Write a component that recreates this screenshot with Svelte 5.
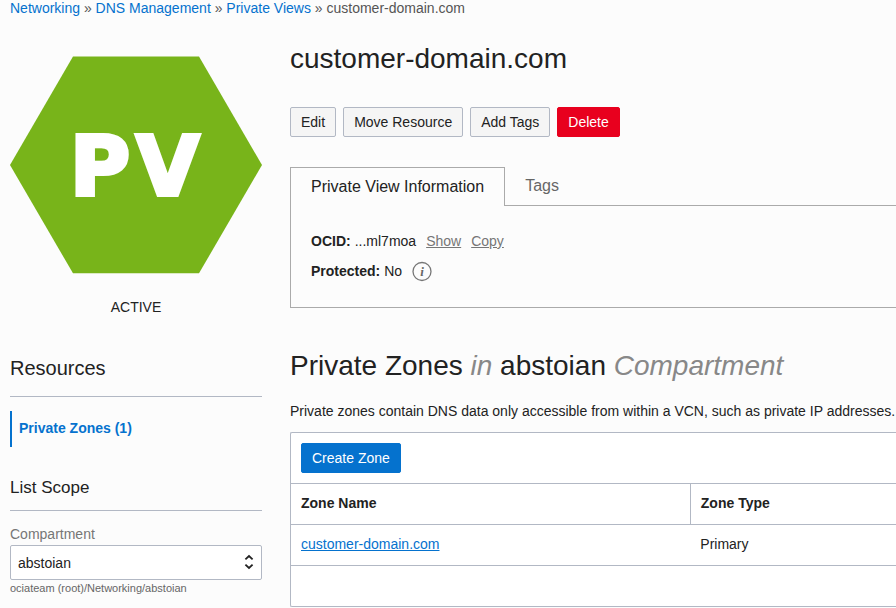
<script>
	const crumbs = ['Networking', 'DNS Management', 'Private Views'];

	const domain = 'customer-domain.com';
	const tabs = ['Private View Information', 'Tags'];
	let activeTab = $state(0);

	let compartment = $state('abstoian');

	const zones = [{ name: 'customer-domain.com', type: 'Primary' }];
</script>

<div class="page">
	<nav class="breadcrumb" aria-label="Breadcrumb">
		{#each crumbs as crumb}
			<a href="#top">{crumb}</a> <span class="sep">»</span>{' '}
		{/each}
		<span class="current">{domain}</span>
	</nav>

	<div class="columns">
		<aside>
			<svg class="hexagon" viewBox="0 0 252 218" role="img" aria-label="Private View">
				<polygon points="63,0.5 189,0.5 252,109 189,217.3 63,217.3 0,109" fill="#78b41a" />
				<text x="60 126" y="139">PV</text>
			</svg>
			<p class="status">ACTIVE</p>

			<h2 class="resources">Resources</h2>
			<a class="side-link" href="#zones">Private Zones ({zones.length})</a>

			<h3 class="scope">List Scope</h3>
			<label for="compartment">Compartment</label>
			<div class="select">
				<select id="compartment" bind:value={compartment}>
					<option value="abstoian">abstoian</option>
				</select>
				<svg class="arrows" viewBox="0 0 10 16" aria-hidden="true">
					<path d="M1.4 5.4 L5 2 L8.6 5.4 M1.4 10.6 L5 14 L8.6 10.6" />
				</svg>
			</div>
			<p class="path">ociateam (root)/Networking/abstoian</p>
		</aside>

		<main>
			<h1>{domain}</h1>

			<div class="actions">
				<button>Edit</button>
				<button>Move Resource</button>
				<button>Add Tags</button>
				<button class="danger">Delete</button>
			</div>

			<div class="tabs" role="tablist">
				{#each tabs as tab, i}
					<button
						role="tab"
						class="tab"
						class:active={activeTab === i}
						aria-selected={activeTab === i}
						onclick={() => (activeTab = i)}>{tab}</button
					>
				{/each}
				<div class="tab-line"></div>
			</div>
			<div class="panel" role="tabpanel">
				<div class="field">
					<b>OCID:</b>
					<span>...ml7moa</span>
					<a href="#show">Show</a>
					<a href="#copy">Copy</a>
				</div>
				<div class="field">
					<b>Protected:</b>
					<span>No</span>
					<svg class="info" viewBox="0 0 20 20" role="img" aria-label="Information">
						<circle cx="10" cy="10.5" r="9" />
						<text x="10" y="15" text-anchor="middle">i</text>
					</svg>
				</div>
			</div>

			<h2 class="zones-title" id="zones">
				Private Zones <em>in</em> {compartment} <em>Compartment</em>
			</h2>
			<p class="intro">
				Private zones contain DNS data only accessible from within a VCN, such as private IP addresses.
			</p>

			<div class="zones">
				<div class="toolbar">
					<button class="primary">Create Zone</button>
				</div>
				<table>
					<thead>
						<tr>
							<th class="name">Zone Name</th>
							<th>Zone Type</th>
						</tr>
					</thead>
					<tbody>
						{#each zones as zone}
							<tr>
								<td><a href="#zone">{zone.name}</a></td>
								<td>{zone.type}</td>
							</tr>
						{/each}
					</tbody>
				</table>
				<div class="footer"></div>
			</div>
		</main>
	</div>
</div>

<style>
	:global(body) {
		background: #fcfcfc;
	}
	.page {
		font-family: 'Liberation Sans', Arial, sans-serif;
		font-size: 14px;
		line-height: 16px;
		color: #222;
		padding-left: 10px;
	}
	h1,
	h2,
	h3,
	p {
		margin: 0;
		font-weight: normal;
	}
	a {
		color: #0572ce;
	}
	button,
	select {
		font: inherit;
		color: inherit;
	}

	.breadcrumb a {
		text-decoration: none;
	}
	.sep,
	.current {
		color: #555;
	}

	.columns {
		display: grid;
		grid-template-columns: 252px minmax(0, 1fr);
		column-gap: 28px;
	}

	/* left column */
	aside {
		padding-top: 40px;
	}
	.hexagon {
		display: block;
		width: 100%;
	}
	.hexagon text {
		font-family: 'DejaVu Sans', sans-serif;
		font-weight: bold;
		font-size: 82px;
		fill: #fff;
		stroke: #fff;
		stroke-width: 4;
	}
	.status {
		margin-top: 25px;
		text-align: center;
	}
	.resources {
		margin-top: 41px;
		padding-bottom: 16px;
		font-size: 20px;
		line-height: 24px;
		border-bottom: 1px solid #b2b8c4;
	}
	.side-link {
		display: block;
		margin-top: 14px;
		padding: 0 7px 2px;
		border-left: 2px solid #0572ce;
		font-weight: bold;
		line-height: 34px;
		text-decoration: none;
	}
	.scope {
		margin-top: 31px;
		padding-bottom: 12px;
		font-size: 17px;
		line-height: 20px;
		border-bottom: 1px solid #b2b8c4;
	}
	label {
		display: block;
		margin-top: 15px;
		color: #767676;
	}
	.select {
		position: relative;
		margin-top: 3px;
	}
	select {
		display: block;
		appearance: none;
		width: 100%;
		height: 35px;
		padding: 0 24px 0 7px;
		border: 1px solid #b2b8c4;
		border-radius: 2px;
		background: #fff;
	}
	.arrows {
		position: absolute;
		right: 8px;
		top: 9px;
		width: 10px;
		height: 16px;
		fill: none;
		stroke: #222;
		stroke-width: 1.8;
		pointer-events: none;
	}
	.path {
		font-size: 11px;
		color: #666;
	}

	/* right column */
	main {
		padding-top: 27px;
	}
	h1,
	.zones-title {
		font-size: 28px;
		line-height: 32px;
	}
	.actions {
		display: flex;
		gap: 7px;
		margin-top: 32px;
	}
	.actions button,
	.primary {
		height: 30px;
		padding: 0 10px;
		border: 1px solid #b2b8c4;
		border-radius: 2px;
		background: #f5f5f5;
	}
	.actions .danger {
		border-color: #e8001e;
		background: #e8001e;
		color: #fff;
	}
	.zones .primary {
		border-color: #0572ce;
		background: #0572ce;
		color: #fff;
	}

	.tabs {
		display: flex;
		margin-top: 30px;
	}
	.tab {
		height: 39px;
		padding: 0 20px;
		border: 0;
		border-bottom: 1px solid #aaa;
		background: none;
		font-size: 16px;
		color: #666;
	}
	.tab.active {
		border: 1px solid #aaa;
		border-bottom: 0;
		color: #222;
	}
	.tab-line {
		flex: 1;
		border-bottom: 1px solid #aaa;
	}
	.panel {
		padding: 26px 20px 27px;
		border-left: 1px solid #aaa;
		border-bottom: 1px solid #aaa;
	}
	.field {
		display: flex;
		align-items: center;
		gap: 4px;
		height: 18px;
	}
	.field + .field {
		margin-top: 12px;
	}
	.field a {
		margin-left: 6px;
		color: #767676;
	}
	.info {
		width: 20px;
		height: 20px;
		margin-left: 6px;
		overflow: visible;
	}
	.info circle {
		fill: none;
		stroke: #767676;
		stroke-width: 1.3;
	}
	.info text {
		font-family: 'Liberation Serif', serif;
		font-style: italic;
		font-weight: bold;
		font-size: 13px;
		fill: #666;
	}

	.zones-title {
		margin-top: 42px;
	}
	.zones-title em {
		color: #888;
	}
	.intro {
		margin-top: 21px;
	}
	.zones {
		margin-top: 13px;
		border: 1px solid #b2b8c4;
		border-right: 0;
		border-radius: 2px 0 0 2px;
		background: #fff;
	}
	.toolbar {
		display: flex;
		padding: 10px;
	}
	table {
		width: 100%;
		border-collapse: collapse;
		table-layout: fixed;
	}
	th,
	td {
		height: 38px;
		padding: 0 10px 2px;
		border-top: 1px solid #b2b8c4;
		text-align: left;
	}
	.name {
		width: 66%;
		box-sizing: border-box;
		border-right: 1px solid #b2b8c4;
	}
	.footer {
		height: 40px;
		border-top: 1px solid #b2b8c4;
	}
</style>
